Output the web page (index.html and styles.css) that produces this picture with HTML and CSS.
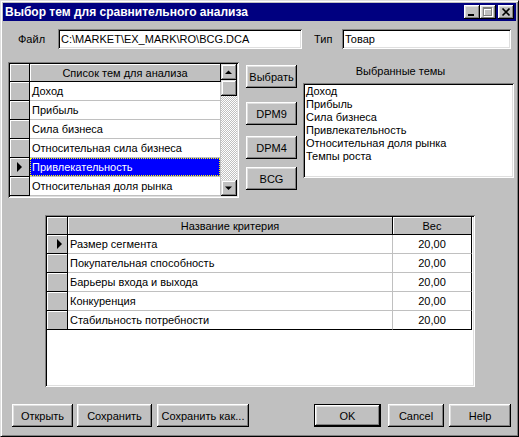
FILE: index.html
```html
<!DOCTYPE html>
<html>
<head>
<meta charset="utf-8">
<link rel="stylesheet" href="styles.css">
</head>
<body>
<div class="window">
  <div class="titlebar">
    <span class="title">Выбор тем для сравнительного анализа</span>
    <div class="tbtns">
      <span class="tbtn"><svg width="16" height="14" viewBox="0 0 16 14" shape-rendering="crispEdges"><rect x="4" y="9" width="6" height="2" fill="#000"/></svg></span>
      <span class="tbtn"><svg width="16" height="14" viewBox="0 0 16 14" shape-rendering="crispEdges"><g fill="#fff"><rect x="4" y="3" width="9" height="2"/><rect x="4" y="3" width="1" height="9"/><rect x="12" y="3" width="1" height="9"/><rect x="4" y="11" width="9" height="1"/></g><g fill="#808080"><rect x="3" y="2" width="9" height="2"/><rect x="3" y="2" width="1" height="9"/><rect x="11" y="2" width="1" height="9"/><rect x="3" y="10" width="9" height="1"/></g></svg></span>
      <span class="tbtn close"><svg width="16" height="14" viewBox="0 0 16 14"><path d="M4.5 3.5 L11.5 10.5 M11.5 3.5 L4.5 10.5" stroke="#000" stroke-width="1.7"/></svg></span>
    </div>
  </div>

  <div class="file-row">
    <span class="lbl lbl-file">Файл</span>
    <div class="edit edit-file">C:\MARKET\EX_MARK\RO\BCG.DCA</div>
    <span class="lbl lbl-type">Тип</span>
    <div class="edit edit-type">Товар</div>
  </div>

  <div class="middle">
    <div class="grid g1">
      <div class="g1-table">
        <div class="fx"></div><div class="fx hc">Список тем для анализа</div>
        <div class="fx"></div><div class="c">Доход</div>
        <div class="fx"></div><div class="c">Прибыль</div>
        <div class="fx"></div><div class="c">Сила бизнеса</div>
        <div class="fx"></div><div class="c">Относительная сила бизнеса</div>
        <div class="fx ind1"><span class="arrow"></span></div><div class="c sel"><span class="focus">Привлекательность</span></div>
        <div class="fx"></div><div class="c">Относительная доля рынка</div>
      </div>
      <div class="vscroll">
        <span class="sbtn"><svg width="16" height="16" viewBox="0 0 16 16"><polygon points="4,10 11,10 7.5,6.5" fill="#000"/></svg></span>
        <span class="sbtn thumb"></span>
        <span class="track"></span>
        <span class="sbtn"><svg width="16" height="16" viewBox="0 0 16 16"><polygon points="4,6.5 11,6.5 7.5,10" fill="#000"/></svg></span>
      </div>
    </div>

    <div class="btncol">
      <button class="btn b-choose">Выбрать</button>
      <button class="btn b-dpm9">DPM9</button>
      <button class="btn b-dpm4">DPM4</button>
      <button class="btn b-bcg">BCG</button>
    </div>

    <div class="chosen">
      <div class="chosen-lbl">Выбранные темы</div>
      <div class="listbox">
        <div>Доход</div>
        <div>Прибыль</div>
        <div>Сила бизнеса</div>
        <div>Привлекательность</div>
        <div>Относительная доля рынка</div>
        <div>Темпы роста</div>
      </div>
    </div>
  </div>

  <div class="grid g2">
    <div class="g2-table">
      <div class="fx"></div><div class="fx hc">Название критерия</div><div class="fx hc">Вес</div>
      <div class="fx ind2"><span class="arrow"></span></div><div class="c">Размер сегмента</div><div class="c v">20,00</div>
      <div class="fx"></div><div class="c">Покупательная способность</div><div class="c v">20,00</div>
      <div class="fx"></div><div class="c">Барьеры входа и выхода</div><div class="c v">20,00</div>
      <div class="fx"></div><div class="c">Конкуренция</div><div class="c v">20,00</div>
      <div class="fx"></div><div class="c last">Стабильность потребности</div><div class="c v last">20,00</div>
    </div>
  </div>

  <div class="footer">
    <button class="btn f-open">Открыть</button>
    <button class="btn f-save">Сохранить</button>
    <button class="btn f-saveas">Сохранить как...</button>
    <button class="btn default f-ok">OK</button>
    <button class="btn f-cancel">Cancel</button>
    <button class="btn f-help">Help</button>
  </div>
</div>
</body>
</html>
```

FILE: styles.css
```css
* { box-sizing: border-box; }
body {
  margin: 0;
  font-family: "Liberation Sans", Arial, sans-serif;
  font-size: 11px;
  color: #000;
}
.window {
  width: 519px;
  height: 437px;
  background: #c0c0c0;
  border: 1px solid;
  border-color: #dfdfdf #000 #000 #dfdfdf;
  box-shadow: inset 1px 1px #fff, inset -1px -1px #808080;
  padding: 2px;
}
.titlebar {
  height: 18px;
  background: #000080;
  display: flex;
  align-items: center;
  justify-content: space-between;
  padding: 0 2px;
}
.title {
  color: #fff;
  font-weight: bold;
  font-size: 12px;
  white-space: nowrap;
}
.tbtns { display: flex; }
.tbtn {
  width: 16px;
  height: 14px;
  background: #c0c0c0;
  box-shadow: inset -1px -1px #000, inset 1px 1px #fff, inset -2px -2px #808080, inset 2px 2px #dfdfdf;
  display: block;
}
.tbtn svg { display: block; }
.tbtn.close { margin-left: 2px; }

/* bevels */
.btn {
  font: inherit;
  color: #000;
  background: #c0c0c0;
  border: none;
  padding: 0;
  height: 23px;
  box-shadow: inset -1px -1px #000, inset 1px 1px #fff, inset -2px -2px #808080, inset 2px 2px #dfdfdf;
  white-space: nowrap;
}
.btn.default {
  box-shadow: inset 0 0 0 1px #000, inset -2px -2px #000, inset 2px 2px #fff, inset -3px -3px #808080, inset 3px 3px #dfdfdf;
}

.file-row {
  display: flex;
  align-items: center;
  margin-top: 8px;
  height: 20px;
}
.lbl { white-space: nowrap; }
.lbl-file { margin-left: 15px; width: 40px; }
.lbl-type { margin-left: 12px; width: 28px; }
.edit {
  height: 20px;
  background: #fff;
  box-shadow: inset 1px 1px #808080, inset -1px -1px #fff, inset 2px 2px #000, inset -2px -2px #dfdfdf;
  padding: 0 3px;
  line-height: 20px;
  white-space: nowrap;
}
.edit-file { width: 244px; }
.edit-type { width: 169px; }

.middle {
  display: flex;
  align-items: flex-start;
  margin-top: 13px;
}
.grid {
  padding: 2px;
  background: #fff;
  box-shadow: inset 1px 1px #808080, inset -1px -1px #fff, inset 2px 2px #000, inset -2px -2px #dfdfdf;
}
.g1 {
  margin-left: 5px;
  width: 231px;
  height: 136px;
  display: flex;
}
.g1-table {
  display: grid;
  grid-template-columns: 20px 191px;
  grid-template-rows: 18px repeat(6, 19px);
}
.fx {
  background: #c0c0c0;
  border-right: 1px solid #000;
  border-bottom: 1px solid #000;
  box-shadow: inset 1px 1px #fff;
  display: flex;
  align-items: center;
}
.hc {
  justify-content: center;
  white-space: nowrap;
}
.c {
  background: #fff;
  border-right: 1px solid #c0c0c0;
  border-bottom: 1px solid #c0c0c0;
  padding-left: 2px;
  line-height: 18px;
  white-space: nowrap;
  overflow: hidden;
}
.c.sel {
  background: #0000ff;
  color: #fff;
  padding: 0;
}
.focus {
  display: block;
  height: 18px;
  line-height: 16px;
  padding-left: 1px;
  border: 1px dotted #ffff00;
}
.arrow {
  width: 0;
  height: 0;
  border-left: 5px solid #000;
  border-top: 5px solid transparent;
  border-bottom: 5px solid transparent;
}
.ind1 { padding-left: 7px; }
.ind2 { padding-left: 10px; }

.vscroll {
  width: 16px;
  display: flex;
  flex-direction: column;
}
.sbtn {
  width: 16px;
  height: 16px;
  background: #c0c0c0;
  box-shadow: inset -1px -1px #000, inset 1px 1px #dfdfdf, inset -2px -2px #808080, inset 2px 2px #fff;
  display: block;
}
.sbtn svg { display: block; }
.track {
  flex: 1;
  background-color: #c0c0c0;
  background-image: conic-gradient(#fff 25%, #c0c0c0 0 50%, #fff 0 75%, #c0c0c0 0);
  background-size: 2px 2px;
}

.btncol {
  margin-left: 7px;
  width: 51px;
  display: flex;
  flex-direction: column;
}
.btncol .btn { width: 51px; }
.b-choose { margin-top: 3px; }
.b-dpm9 { margin-top: 14px; }
.b-dpm4 { margin-top: 11px; }
.b-bcg { margin-top: 8px; }

.chosen {
  margin-left: 6px;
  width: 211px;
}
.chosen-lbl {
  padding-top: 3px;
  line-height: 13px;
  text-align: center;
  padding-right: 16px;
}
.listbox {
  margin-top: 5px;
  height: 95px;
  background: #fff;
  box-shadow: inset 1px 1px #808080, inset -1px -1px #fff, inset 2px 2px #000, inset -2px -2px #dfdfdf;
  padding: 2px 3px;
  line-height: 13px;
  white-space: nowrap;
}

.g2 {
  margin-top: 17px;
  margin-left: 42px;
  width: 430px;
  height: 172px;
}
.g2-table {
  display: grid;
  grid-template-columns: 21px 325px 79px;
  grid-template-rows: 18px repeat(5, 19px);
}
.c.v {
  text-align: center;
  padding-left: 0;
  border-right-color: #000;
}
.c.last { border-bottom-color: #000; }

.footer {
  display: flex;
  margin-top: 17px;
}
.f-open { margin-left: 9px; width: 61px; }
.f-save { margin-left: 4px; width: 75px; }
.f-saveas { margin-left: 5px; width: 92px; }
.f-ok { margin-left: 65px; width: 67px; }
.f-cancel { margin-left: 7px; width: 56px; }
.f-help { margin-left: 5px; width: 62px; }
```
